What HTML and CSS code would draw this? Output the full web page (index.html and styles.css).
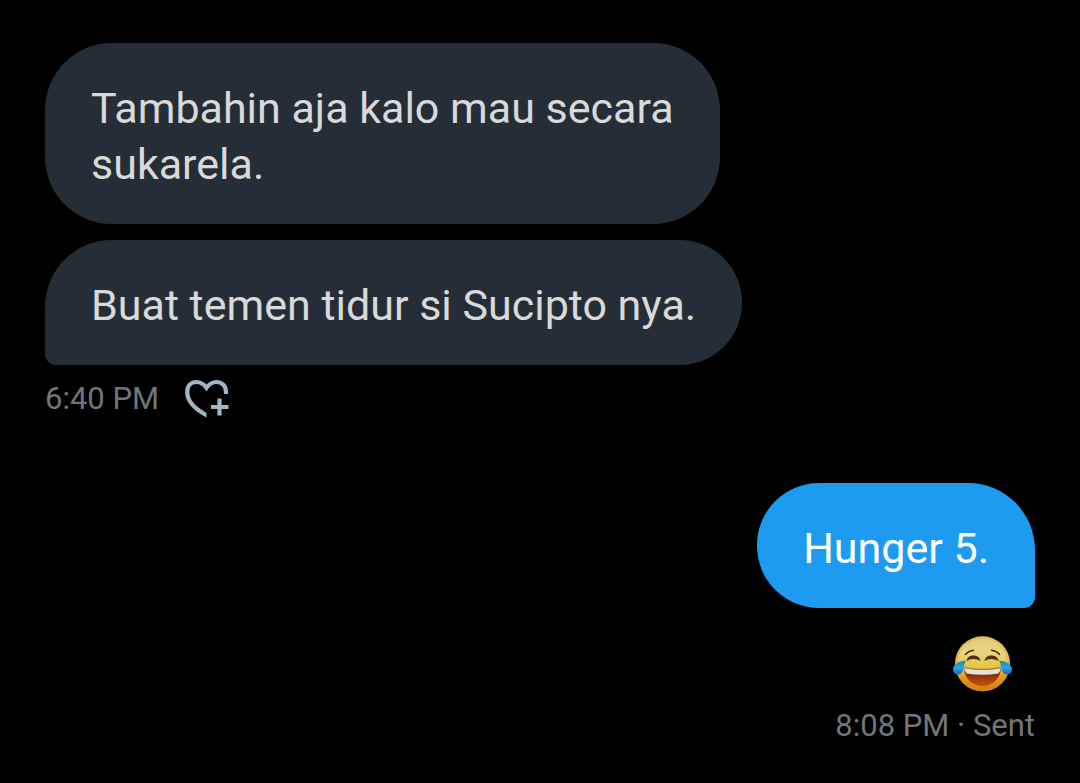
FILE: index.html
```
<!DOCTYPE html>
<html lang="id">
<head>
    <meta charset="UTF-8">
    <meta name="viewport" content="width=device-width, initial-scale=1.0">
    <title>Messages</title>
    <link rel="stylesheet" href="styles.css">
</head>
<body>
    <main class="chat">
        <section class="group received">
            <p class="bubble">Tambahin aja kalo mau secara<br>sukarela.</p>
            <p class="bubble last">Buat temen tidur si Sucipto nya.</p>
            <div class="meta">
                <time>6:40 PM</time>
                <button class="react" type="button" aria-label="Add reaction">
                    <svg width="44" height="40" viewBox="0 0 44 40" fill="none" stroke="currentColor" stroke-width="4.2">
                        <clipPath id="heart-cut"><path d="M0 0H44V15H21.5V40H0Z"/></clipPath>
                        <path clip-path="url(#heart-cut)" d="M41 17V13C41 7 37 3 31.5 3C27.5 3 24.3 4.8 21.5 8.8C18.7 4.8 15.5 3 11.5 3C6 3 2.2 7 2.2 13C2.2 22.5 10 30.5 24 37.5"/>
                        <path d="M34.5 19.5V36.5M26 28H43.5"/>
                    </svg>
                </button>
            </div>
        </section>

        <section class="group sent">
            <p class="bubble last">Hunger 5.</p>
            <svg class="emoji" role="img" aria-label="Face with tears of joy" width="60" height="56" viewBox="0 0 60 56">
                <defs>
                    <linearGradient id="face" x1="0" y1="0" x2="0" y2="1">
                        <stop offset="0" stop-color="#e2cb78"/>
                        <stop offset="0.3" stop-color="#ead582"/>
                        <stop offset="0.55" stop-color="#e8c53f"/>
                        <stop offset="0.75" stop-color="#e39a1e"/>
                        <stop offset="1" stop-color="#d6720f"/>
                    </linearGradient>
                    <radialGradient id="rim" cx="0.5" cy="0.48" r="0.52">
                        <stop offset="0.8" stop-color="#d99a12" stop-opacity="0"/>
                        <stop offset="1" stop-color="#d38d10" stop-opacity="0.7"/>
                    </radialGradient>
                    <linearGradient id="mouth" x1="0" y1="0" x2="0" y2="1">
                        <stop offset="0.3" stop-color="#862706"/>
                        <stop offset="1" stop-color="#c9540c"/>
                    </linearGradient>
                    <linearGradient id="tear" x1="0" y1="0" x2="0" y2="1">
                        <stop offset="0" stop-color="#1c86ae"/>
                        <stop offset="0.5" stop-color="#28a8e0"/>
                        <stop offset="1" stop-color="#1763c8"/>
                    </linearGradient>
                </defs>
                <circle cx="29.5" cy="27.8" r="27.5" fill="url(#face)"/>
                <circle cx="29.5" cy="27.8" r="27.5" fill="url(#rim)"/>
                <path fill="none" stroke="#51300d" stroke-width="1.6" stroke-linecap="round" d="M12.5 18.3Q15.5 14.8 20.5 14.2M38.5 14.2Q43.5 14.800 46.500 18.3"/>
                <path fill="#51300d" d="M13.5 25C14.500 17.800 26.500 17.800 27.500 25C23.500 22.300 17.500 22.300 13.500 25ZM31.500 25C32.500 17.800 44.500 17.800 45.500 25C41.500 22.300 35.500 22.300 31.500 25Z"/>
                <path fill="url(#mouth)" d="M11.5 32Q29.5 36 47.5 32C48.5 42 39 50 29.5 50C20 50 10.5 42 11.5 32Z"/>
                <path fill="#e3e0dc" d="M11.500 32Q29.5 36 47.5 32Q47.5 35.500 45.5 37.500Q29.5 40 13.5 37.500Q11.5 35.500 11.5 32Z"/>
                <path fill="none" stroke="#927b3b" d="M11.5 31.500Q29.5 35.500 47.5 31.500"/>
                <path fill="url(#tear)" d="M12.8 24.8C8 24.500 1.500 27.500 .3 31.800C-1 37 3 39.500 7 38C11.500 36 10.500 29 12.8 24.8ZM46.2 24.8C51 24.500 57.500 27.500 58.700 31.800C60 37 56 39.500 52 38C47.5 36 48.500 29 46.2 24.8Z"/>
            </svg>
            <div class="meta">
                <span><time>8:08 PM</time> · Sent</span>
            </div>
        </section>
    </main>
</body>
</html>
```
FILE: styles.css
```
body {
    margin: 0;
    background-color: #000;
    font-family: Roboto, "Open Sans", sans-serif;
}
.chat {
    display: flex;
    flex-direction: column;
    gap: 64px;
    padding: 43px 45px 37px;
}
.group {
    display: flex;
    flex-direction: column;
    align-items: flex-start;
}
.sent {
    align-items: flex-end;
}
.bubble {
    margin: 0;
    padding: 37px 46px 32px;
    border-radius: 67px;
    background-color: #252e36;
    color: #d9d9d9;
    font-size: 43px;
    line-height: 56px;
}
.bubble + .bubble {
    margin-top: 16px;
}
.received .last {
    border-radius: 67px 62px 62px 11px;
}
.sent .bubble {
    border-radius: 62px 67px 11px 62px;
    background-color: #1d9bf0;
    color: #fff;
}
.meta {
    display: flex;
    align-items: center;
    gap: 26px;
    margin-top: 14px;
    color: #71767b;
    font-size: 31px;
    line-height: 40px;
}
.react {
    display: flex;
    padding: 0;
    border: none;
    background: none;
    color: #a1b5c3;
    cursor: pointer;
}
.emoji {
    margin: 28px 22px 0 0;
}
```
